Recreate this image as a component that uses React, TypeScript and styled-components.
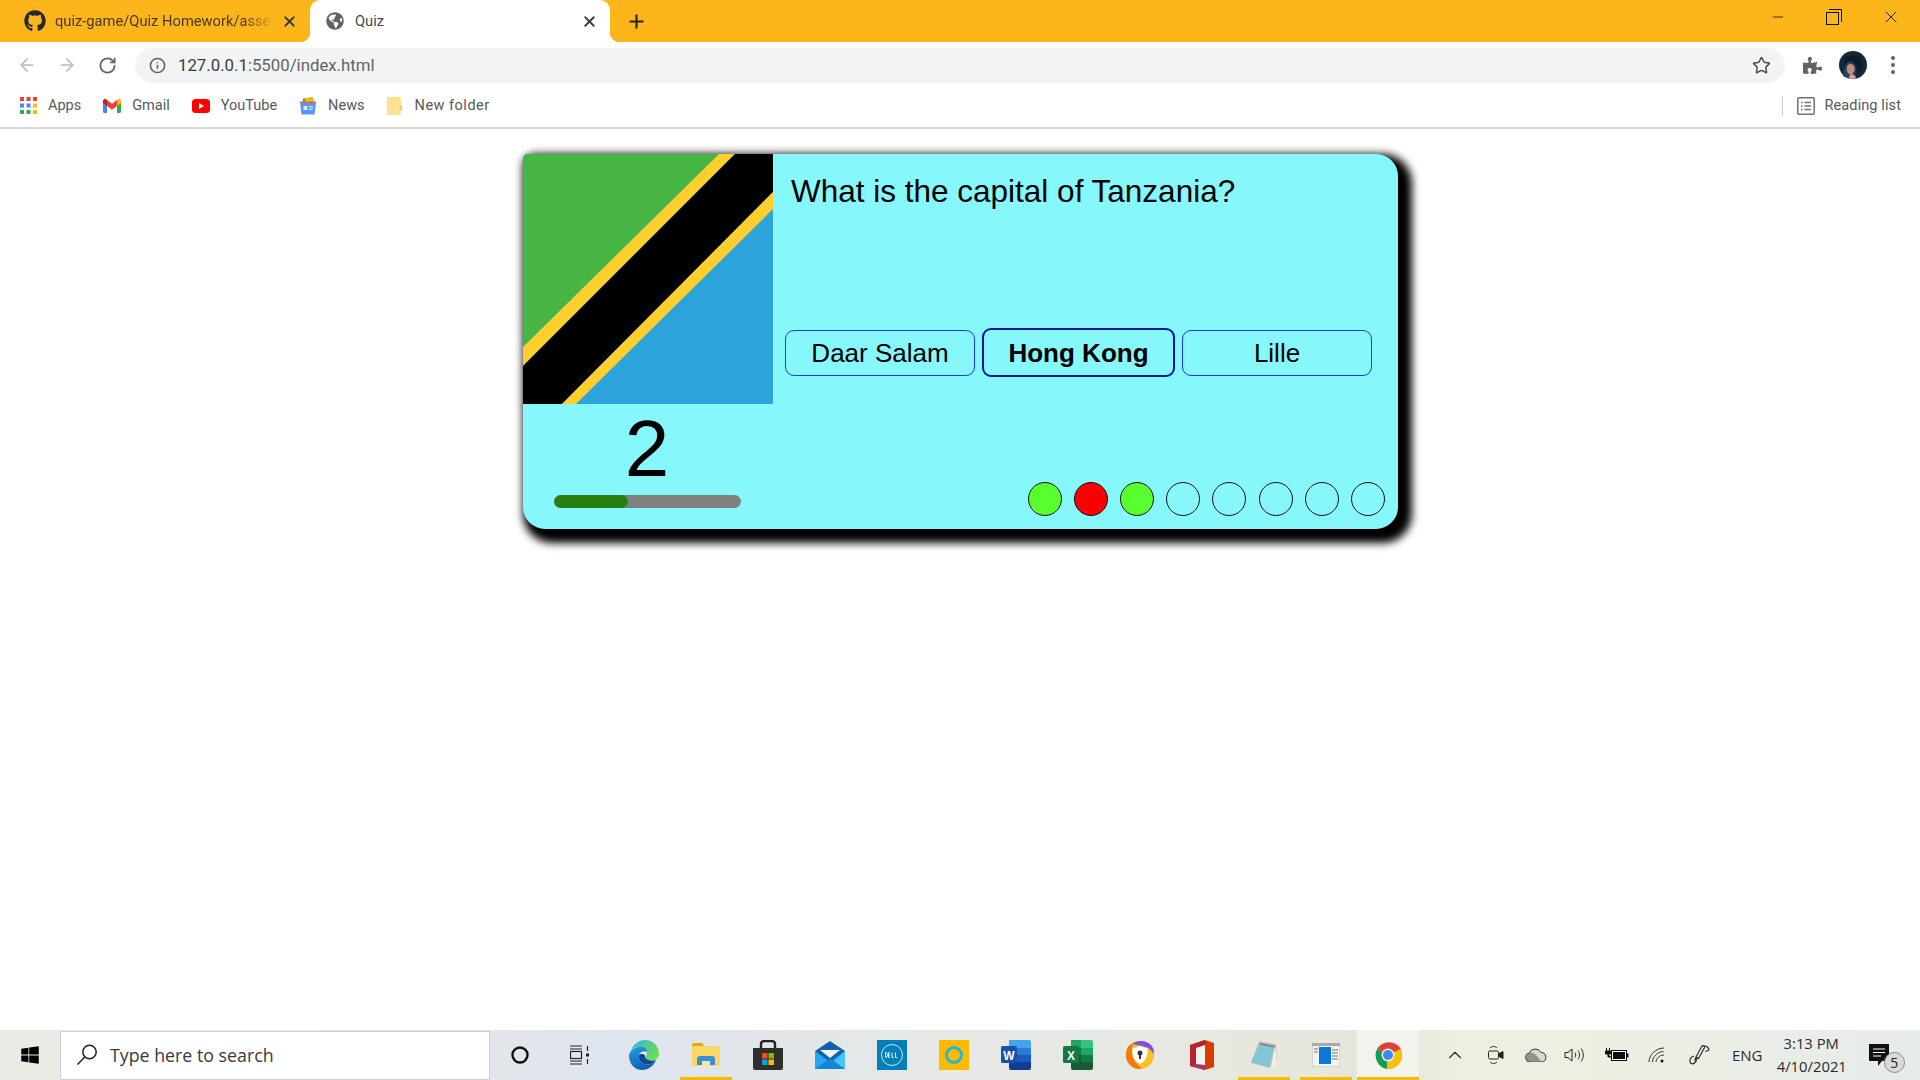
import React from "react";
import styled, { createGlobalStyle } from "styled-components";
import { FaGithub, FaGlobeAmericas, FaPuzzlePiece, FaWindows } from "react-icons/fa";
import { ArrowLeft, RotateCw, Info, Star, Plus, X, Minus, ChevronUp } from "lucide-react";

const GlobalStyle = createGlobalStyle`
  html, body { margin: 0; padding: 0; height: 100%; background: #fff; }
  #root { height: 100%; }
  * { box-sizing: border-box; }
`;

const Screen = styled.div`
  height: 1080px; width: 1920px; display: flex; flex-direction: column; overflow: hidden;
  font-family: "Open Sans", "Liberation Sans", sans-serif; background: #fff;
`;

/* ---------- Browser chrome ---------- */
const TabStrip = styled.div`
  height: 42px; flex: none; background: #fdb51c; display: flex; align-items: stretch; padding-left: 10px; color: #202124;
`;
const Tab = styled.div<{ $active?: boolean }>`
  width: 300px; position: relative; display: flex; align-items: center; padding: 0 10px 0 14px;
  font-family: Roboto, "Open Sans", sans-serif; font-size: 14.7px;
  color: ${(p) => (p.$active ? "#45494d" : "#4a3a14")};
  background: ${(p) => (p.$active ? "#fff" : "transparent")};
  border-radius: 10px 10px 0 0;
  ${(p) =>
    p.$active &&
    `
    &::before, &::after { content: ""; position: absolute; bottom: 0; width: 10px; height: 10px; }
    &::before { left: -10px; background: radial-gradient(circle at 0 0, transparent 10px, #fff 10.5px); }
    &::after { right: -10px; background: radial-gradient(circle at 100% 0, transparent 10px, #fff 10.5px); }
  `}
`;
const TabIcon = styled.span<{ $color: string }>`
  width: 22px; display: flex; align-items: center; justify-content: center; flex: none; color: ${(p) => p.$color};
`;
const TabTitle = styled.span<{ $fade?: boolean }>`
  flex: 1; margin-left: 9px; white-space: nowrap;
  ${(p) => p.$fade && `-webkit-mask-image: linear-gradient(90deg, #000 84%, transparent 97%);`}
`;
const TabClose = styled.span`
  display: flex; margin-right: 2px; color: #3a3a3a;
`;
const NewTab = styled.div`
  display: flex; align-items: center; margin-left: 16px; color: #2b2312;
`;
const WindowControls = styled.div`
  margin-left: auto; display: flex; align-items: center; color: #111; padding: 0 19px 8px 0; gap: 41px;
`;
const RestoreIcon = styled.span`
  width: 13px; height: 13px; position: relative; display: block; border: 1px solid #111;
  margin-top: 2px; margin-left: -1px; margin-right: 1px;
  &::after {
    content: ""; position: absolute; left: 2px; top: -4px; width: 12px; height: 12px;
    border-top: 1px solid #111; border-right: 1px solid #111;
  }
`;
const Toolbar = styled.div`
  height: 46px; flex: none; display: flex; align-items: center; background: #fff; padding-left: 17px;
`;
const NavButton = styled.span<{ $muted?: boolean }>`
  width: 20px; margin-right: 20px; display: flex; justify-content: center;
  color: ${(p) => (p.$muted ? "#b9bbbe" : "#5f6368")};
`;
const FlippedArrow = styled(ArrowLeft)`
  transform: scaleX(-1);
`;
const Omnibox = styled.div`
  width: 1650px; height: 35px; margin-left: -2px; background: #f1f3f4; border-radius: 18px; display: flex; align-items: center;
  padding: 0 14px 0 14px; color: #5f6368;
`;
const UrlText = styled.span`
  font-family: Roboto, "Open Sans", sans-serif; font-size: 16.8px; color: #3c3c3c; margin-left: 12px; flex: 1;
`;
const UrlPath = styled.span`
  color: #5f6368;
`;
const ToolIcons = styled.div`
  display: flex; align-items: center; margin-left: 18px; color: #5f6368; gap: 17px;
`;
const MenuDots = styled.span`
  display: flex; flex-direction: column; gap: 3px; margin-left: 7px;
  & > i { width: 4px; height: 4px; border-radius: 50%; background: #5f6368; display: block; }
`;
const BookmarksBar = styled.div`
  height: 41px; flex: none; display: flex; align-items: center; padding: 0 19px 4px 20px; background: #fff;
  border-bottom: 2px solid #d9dadb;
  font-family: Roboto, "Open Sans", sans-serif; font-size: 14.5px; color: #55585c;
`;
const Bookmark = styled.div`
  display: flex; align-items: center; gap: 11px; margin-right: 22px;
`;
const FolderLabel = styled.span`
  letter-spacing: 0.5px; margin-left: 2px;
`;
const ReadingList = styled.div`
  margin-left: auto; display: flex; align-items: center; gap: 10px; height: 20px;
  border-left: 1px solid #cfd0d2; padding-left: 14px; letter-spacing: 0.1px;
`;

/* ---------- Quiz ---------- */
const Content = styled.main`
  flex: 1; background: #fff; padding-top: 25px;
`;
const Card = styled.section`
  width: 875px; height: 375px; margin: 0 auto; position: relative; left: 0.5px;
  display: grid; grid-template-columns: 250px 1fr; grid-template-rows: 250px 125px;
  background: #86f7fb; border-radius: 5px 22px 22px 22px; box-shadow: 7px 7px 8px 7px #000;
  font-family: "Liberation Sans", Arial, sans-serif; color: #000; overflow: hidden;
`;
const FlagImage = styled.svg`
  display: block; width: 250px; height: 250px;
`;
const QuestionPanel = styled.div`
  display: flex; flex-direction: column; justify-content: space-between; padding: 19px 26px 27px 12px;
`;
const Question = styled.h2`
  margin: 0 0 0 6px; font-weight: 400; font-size: 31.5px; line-height: 37px;
`;
const Answers = styled.div`
  display: flex; align-items: center; gap: 8.5px;
`;
const AnswerButton = styled.button<{ $active?: boolean }>`
  width: ${(p) => (p.$active ? "193px" : "190px")}; height: ${(p) => (p.$active ? "49px" : "46px")};
  margin: ${(p) => (p.$active ? "0 -1.5px" : "0")};
  background: transparent; padding: 1px 0 0;
  border: ${(p) => (p.$active ? "2px solid #00169a" : "1px solid #1a3af5")}; border-radius: 9px;
  font: ${(p) => (p.$active ? "700" : "400")} 26px "Liberation Sans", Arial, sans-serif; color: #000;
`;
const TimerPanel = styled.div`
  display: flex; flex-direction: column; align-items: center; padding-right: 2px;
`;
const Counter = styled.div`
  font-size: 80px; line-height: 72px; margin-top: 9px; height: 82px;
`;
const TimeBar = styled.div`
  width: 187px; height: 13px; border-radius: 7px; background: #808080; overflow: hidden;
`;
const TimeFill = styled.div`
  height: 100%; background: #277f10; border-radius: 7px;
`;
const DotsPanel = styled.div`
  display: flex; justify-content: flex-end; align-items: flex-end; gap: 12.2px; padding: 0 13px 13px 0;
`;
const Dot = styled.span<{ $state?: "right" | "wrong" }>`
  width: 34px; height: 34px; border-radius: 50%; border: 1px solid #111;
  background: ${(p) => (p.$state === "right" ? "#58ff2f" : p.$state === "wrong" ? "#fb0000" : "transparent")};
`;

/* ---------- Taskbar ---------- */
const Taskbar = styled.footer`
  height: 50px; flex: none; display: flex; align-items: stretch; color: #222;
  background: linear-gradient(90deg, #ebebe5 0%, #e6e8e8 20%, #dfe5ef 32%, #e5e8e5 48%, #e6e8e0 65%, #e6e6da 73%, #eeefe0 76%, #ebeee4 88%, #e6ecec 100%);
`;
const StartButton = styled.div`
  width: 60px; display: flex; align-items: center; justify-content: center; color: #000;
`;
const SearchBox = styled.div`
  width: 430px; background: #fff; border: 1px solid #cfcfcf; display: flex; align-items: center;
  padding: 0 0 2px 15px; gap: 12px; font-size: 17.8px; color: #3a3a3a; margin-top: 1px;
`;
const TaskSlot = styled.div<{ $w?: number; $open?: boolean; $focus?: boolean }>`
  width: ${(p) => p.$w ?? 62}px; position: relative; display: flex; align-items: center; justify-content: center;
  background: ${(p) => (p.$focus ? "#f2f3ec" : "transparent")};
  ${(p) =>
    p.$open &&
    `&::after { content: ""; position: absolute; left: ${p.$focus ? 0 : 5}px; right: ${p.$focus ? 0 : 5}px; bottom: 0; height: 3px; background: #ffb900; }`}
`;
const TaskGap = styled.div`
  width: 3px;
`;
const Tray = styled.div`
  flex: 1; display: flex; align-items: center; padding-left: 16px; font-size: 15px; color: #2a2a2a;
`;
const TraySlot = styled.div`
  width: 40.4px; display: flex; justify-content: center; align-items: center;
`;
const Lang = styled.div`
  width: 59px; text-align: center; font-size: 15px;
`;
const Clock = styled.div`
  width: 69px; text-align: center; font-size: 14.8px; line-height: 23px; margin-top: -1px; white-space: nowrap;
`;
const Notifications = styled.div`
  position: relative; margin-left: 23px; width: 24px; height: 24px; margin-top: 1px;
`;
const Badge = styled.span`
  position: absolute; right: -12px; top: 8px; width: 21px; height: 21px; border-radius: 50%;
  background: #d9dcd6; border: 1px solid #8a8a8a; font-size: 14px; line-height: 19px; text-align: center; color: #222;
`;

/* ---------- Drawn icons ---------- */
const Flag = () => (
  <FlagImage viewBox="0 0 250 250">
    <rect width="250" height="250" fill="#2ca4db" />
    <polygon points="0,0 196,0 0,193" fill="#46b544" />
    <polygon points="196,0 212,0 0,212 0,193" fill="#fccf2e" />
    <polygon points="212,0 250,0 250,38 39,250 0,250 0,212" fill="#000" />
    <polygon points="250,38 250,55 53,250 39,250" fill="#fccf2e" />
  </FlagImage>
);

const AppsIcon = () => (
  <svg width="17" height="17" viewBox="0 0 17 17">
    {[
      ["#ea4335", "#ea4335", "#ea4335"],
      ["#4285f4", "#4285f4", "#fbbc05"],
      ["#34a853", "#34a853", "#fbbc05"],
    ].map((row, y) => row.map((c, x) => <rect key={`${x}${y}`} x={x * 6.5} y={y * 6.5} width="4" height="4" fill={c} />))}
  </svg>
);
const GmailIcon = () => (
  <svg width="18" height="14" viewBox="0 0 18 14">
    <path d="M0 2v10.5A1.5 1.5 0 0 0 1.5 14H4V6z" fill="#4285f4" />
    <path d="M18 2v10.5a1.5 1.5 0 0 1-1.5 1.5H14V6z" fill="#34a853" />
    <path d="M14 1v6l4-3V2c0-2-2-2.500-3-1.700z" fill="#fbbc05" />
    <path d="M4 7V1l5 3.800L14 1v6L9 10.700z" fill="#ea4335" />
    <path d="M0 2v2l4 3V1L3 .3C2-.5 0 0 0 2z" fill="#c5221f" />
  </svg>
);
const YoutubeIcon = () => (
  <svg width="18" height="14" viewBox="0 0 18 14">
    <rect width="18" height="14" rx="3.500" fill="#f00" />
    <polygon points="7,4 12,7 7,10" fill="#fff" />
  </svg>
);
const NewsIcon = () => (
  <svg width="18" height="18" viewBox="0 0 18 18">
    <rect x="4" y="1" width="10" height="6" fill="#34a853" transform="rotate(-8 9 4)" />
    <rect x="6" y="1" width="9" height="6" fill="#fbbc05" transform="rotate(8 10 4)" />
    <path d="M1 5l16 0-1.500 12.500H2.500z" fill="#5a95ee" />
    <rect x="1" y="4.500" width="16" height="1.500" fill="#e9604f" />
    <rect x="4.500" y="9" width="4" height="4" fill="#dbe7fb" />
    <rect x="10" y="9" width="4" height="1.200" fill="#dbe7fb" />
    <rect x="10" y="11.500" width="4" height="1.200" fill="#dbe7fb" />
  </svg>
);
const FolderIcon = () => (
  <svg width="15" height="18" viewBox="0 0 15 18">
    <path d="M1 0h11.500A1.500 1.500 0 0 1 14 1.500V17a1 1 0 0 1-1 1H1a1 1 0 0 1-1-1V1a1 1 0 0 1 1-1z" fill="#fde293" />
    <path d="M13 8v4h-1v1.500h3V8z" fill="#f6cf63" />
  </svg>
);
const ReadingIcon = () => (
  <svg width="18" height="18" viewBox="0 0 18 18" fill="none" stroke="#6f7276" strokeWidth="1.500">
    <rect x=".8" y=".8" width="16.400" height="16.400" rx="1" />
    <path d="M4 5.500h1.500M4 9h1.500M4 12.500h1.500M7.500 5.500H14M7.500 9H14M7.500 12.500H14" />
  </svg>
);
const Avatar = () => (
  <svg width="28" height="28" viewBox="0 0 28 28">
    <circle cx="14" cy="14" r="14" fill="#13283a" />
    <path d="M4 25c1-8 3-14 7-15 3 0 6 4 6 9l-1 8c-5 1-9 0-12-2z" fill="#28445f" />
    <path d="M9 14c2-2 5-1 6 1s1 5-1 7-4 1-5 0-2-6 0-8z" fill="#c98a7c" />
    <path d="M12 23c2 0 4 1 5 4-2 1-5 1-7 .5 0-2 1-4.500 2-4.500z" fill="#d8a3a0" />
    <path d="M5 8C9 3 19 3 23 9c2 4 1 9-3 13-1-5-3-10-8-11-3-1-5 1-7 4z" fill="#0c1c2a" />
  </svg>
);
const SearchGlass = () => (
  <svg width="22" height="22" viewBox="0 0 22 22" fill="none" stroke="#222" strokeWidth="1.500">
    <circle cx="13.500" cy="8" r="6.700" />
    <path d="M8.800 13 1.500 20.500" />
  </svg>
);
const TaskViewIcon = () => (
  <svg width="21" height="20" viewBox="1 0 21 20" fill="none" stroke="#222" strokeWidth="1.200">
    <path d="M1 1h12M1 4h12" />
    <rect x="1.500" y="6.500" width="11" height="7" />
    <path d="M1 16h12M1 19h12M18.500 1v5M18.500 14v5" />
    <rect x="17" y="8.500" width="3" height="3" fill="#222" stroke="none" />
  </svg>
);
const EdgeIcon = () => (
  <svg width="30" height="30" viewBox="0 0 30 30">
    <defs>
      <linearGradient id="edgeA" x1="0" y1="0" x2="1" y2="0.600">
        <stop offset="0" stopColor="#2ab9d6" />
        <stop offset="1" stopColor="#6fdc5a" />
      </linearGradient>
      <linearGradient id="edgeB" x1="0" y1="0" x2="0.500" y2="1">
        <stop offset="0" stopColor="#1f9fe6" />
        <stop offset="1" stopColor="#0f5fb0" />
      </linearGradient>
    </defs>
    <path d="M2 11C4 4 10 0 16 0c8 0 14 6 14 14 0 4-3 6.500-7 6.500-4 0-7-1-7-3 0-1 2-1.500 2-4 0-3-3-7-8-7-3 0-6 2-8 4.500z" fill="url(#edgeA)" />
    <path d="M2 11c3-3 6-4.500 9-4.500 4 0 7 2.500 7 5.500-2-1.500-7-1-8 3-1 5 3 10 9 9.500 3 0 6-2 8-4.500-2 6-8 10-14 10C6 30 0 24 0 16c0-2 1-4 2-5z" fill="url(#edgeB)" />
    <path d="M10 15c-1 5 3 10 9 9.500 3 0 6-2 8-4.500-2 .8-3 .8-4 .5-4 0-8-2-7-5-1-2-5-2-6-.500z" fill="#0c4a98" />
  </svg>
);
const ExplorerIcon = () => (
  <svg width="28" height="24" viewBox="0 0 28 24">
    <path d="M0 2a2 2 0 0 1 2-2h8l3 4H0z" fill="#e8a612" />
    <rect y="3" width="28" height="20" rx="1.500" fill="#fdd868" />
    <path d="M5 22v-6a3 3 0 0 1 3-3h12a3 3 0 0 1 3 3v6h-5v-4h-8v4z" fill="#3a8fd8" />
    <rect x="10" y="18" width="8" height="5" fill="#fde79a" />
  </svg>
);
const StoreIcon = () => (
  <svg width="30" height="30" viewBox="0 0 30 30">
    <path d="M8 8V4a3 3 0 0 1 3-3h8a3 3 0 0 1 3 3v4" fill="none" stroke="#222" strokeWidth="2.400" />
    <path d="M0 8h30v20a2 2 0 0 1-2 2H2a2 2 0 0 1-2-2z" fill="#2e2e2e" />
    <rect x="9" y="13" width="5.500" height="5.500" fill="#f25022" />
    <rect x="15.500" y="13" width="5.500" height="5.500" fill="#7fba00" />
    <rect x="9" y="19.500" width="5.500" height="5.500" fill="#00a4ef" />
    <rect x="15.500" y="19.500" width="5.500" height="5.500" fill="#ffb900" />
  </svg>
);
const MailIcon = () => (
  <svg width="30" height="28" viewBox="0 0 30 28">
    <path d="M0 10 15 0l15 10v18H0z" fill="#0f63ad" />
    <path d="M5 9h20l-10 8z" fill="#f2f4f6" />
    <path d="M0 10l15 11 15-11v18H0z" fill="#27a7ea" />
    <path d="M30 10v18H12z" fill="#47c4f3" />
    <path d="M0 28 15 17.500 30 28z" fill="#1484d6" />
  </svg>
);
const DellIcon = () => (
  <svg width="30" height="30" viewBox="0 0 30 30">
    <rect width="30" height="30" fill="#007fba" />
    <circle cx="15" cy="15" r="10.500" fill="none" stroke="#cfe6f2" strokeWidth="1" />
    <path d="M8.500 12.500v5M8.500 12.500c3 0 3 5 0 5M13 12.500h-1.500v5H13M11.500 15H13M15 12.500v5h2M18.500 12.500v5h2" fill="none" stroke="#e4f1f8" strokeWidth="1" />
  </svg>
);
const AlexaIcon = () => (
  <svg width="30" height="30" viewBox="0 0 30 30">
    <rect width="30" height="30" fill="#ffb900" />
    <circle cx="15" cy="15" r="7.500" fill="none" stroke="#22b7d6" strokeWidth="3" />
  </svg>
);
const WordIcon = () => (
  <svg width="30" height="30" viewBox="0 0 30 30">
    <path d="M8 0h20a2 2 0 0 1 2 2v6H8z" fill="#41a5ee" />
    <rect x="8" y="8" width="22" height="7" fill="#2b7cd3" />
    <rect x="8" y="15" width="22" height="7" fill="#185abd" />
    <path d="M8 22h22v6a2 2 0 0 1-2 2H10a2 2 0 0 1-2-2z" fill="#103f91" />
    <rect y="6" width="16" height="17" rx="1.500" fill="#1651b0" />
    <text x="8" y="19.500" textAnchor="middle" fontFamily="Liberation Sans" fontWeight="700" fontSize="12" fill="#fff">W</text>
  </svg>
);
const ExcelIcon = () => (
  <svg width="30" height="30" viewBox="0 0 30 30">
    <path d="M8 0h10v8H8z" fill="#21a366" />
    <path d="M18 0h10a2 2 0 0 1 2 2v6H18z" fill="#33c481" />
    <rect x="8" y="8" width="10" height="7" fill="#107c41" />
    <rect x="18" y="8" width="12" height="7" fill="#21a366" />
    <rect x="8" y="15" width="10" height="7" fill="#185c37" />
    <rect x="18" y="15" width="12" height="7" fill="#107c41" />
    <path d="M8 22h22v6a2 2 0 0 1-2 2H10a2 2 0 0 1-2-2z" fill="#185c37" />
    <rect y="6" width="16" height="17" rx="1.500" fill="#107c41" />
    <text x="8" y="19.500" textAnchor="middle" fontFamily="Liberation Sans" fontWeight="700" fontSize="12" fill="#fff">X</text>
  </svg>
);
const BrowserShieldIcon = () => (
  <svg width="28" height="28" viewBox="0 0 28 28">
    <circle cx="14" cy="14" r="14" fill="#f9c02e" />
    <path d="M6 3C11-1 20-1 25 4c2 2 3 5 3 9-3-4-6-7-9-7-5-2-9-2-13-3z" fill="#7c4fe0" />
    <path d="M0 14C0 8 3 3 6 3c1 2 0 3 0 5-1 6 1 12 8 18 1 1 2 2 0 2C6 28 0 22 0 14z" fill="#f4780e" />
    <path d="M14 5c3 1 5 2 7.500 2 .8 7-1.500 13-7.500 16-6-3-8.300-9-7.500-16 2.500 0 4.500-1 7.500-2z" fill="#fff" />
    <circle cx="14" cy="12" r="2.500" fill="#2c3548" />
    <rect x="13" y="13" width="2" height="5" fill="#2c3548" />
  </svg>
);
const OfficeIcon = () => (
  <svg width="24" height="30" viewBox="0 0 24 30">
    <path d="M15 0 24 3v24l-9 3-15-4V5z" fill="#d83b01" />
    <path d="M15 0 0 5v21l6-2V8l9-3z" fill="#b7232c" />
    <path d="M0 26l15 4 0-5-9-1z" fill="#a8326d" />
    <path d="M15 5v20l-9-1V8z" fill="#f2f2ea" />
  </svg>
);
const NotepadIcon = () => (
  <svg width="28" height="30" viewBox="0 0 28 30">
    <path d="M9 1 26 4l1 20-2 4L1 23z" fill="#c8c3b2" />
    <path d="M10 3l15 3-6 22L1 22z" fill="#84c6d8" />
    <path d="M25 6l2 18-2 4-4-1z" fill="#f4f2e8" />
    <path d="M10 3l15 3-.5 1.500-15-3z" fill="#7a7a7a" />
  </svg>
);
const WindowAppIcon = () => (
  <svg width="28" height="24" viewBox="0 0 28 24">
    <rect width="28" height="24" fill="#f3f3f3" stroke="#b4b4b4" />
    <rect x="0" y="0" width="28" height="3" fill="#a9a9a9" />
    <rect x="7" y="4" width="12" height="17" fill="#0a78d8" />
    <path d="M2 6h4M2 9h4M20 7h6M20 10h6M20 13h6M20 16h6" stroke="#a0a0a0" strokeWidth="1.400" />
  </svg>
);
const ChromeIcon = () => (
  <svg width="28" height="28" viewBox="0 0 28 28">
    <path d="M14 14 3 8A14 14 0 0 1 27 8z" fill="#db4437" />
    <path d="M14 14 3 8a14 14 0 0 0 10 20z" fill="#0f9d58" />
    <path d="M14 14 27 8a14 14 0 0 1-14 20z" fill="#f4c20d" />
    <circle cx="14" cy="14" r="6.500" fill="#f1f3f4" />
    <circle cx="14" cy="14" r="5" fill="#4285f4" />
  </svg>
);
const MeetIcon = () => (
  <svg width="16" height="20" viewBox="0 0 16 20" fill="none" stroke="#222" strokeWidth="1">
    <rect x=".5" y="6" width="10" height="8" rx="1.500" />
    <path d="M11 8.500 15 6.500v7L11 11.500z" fill="#222" />
    <path d="M2 3c2-2 5-2 7 0M2 17c2 2 5 2 7 0" />
  </svg>
);
const CloudIcon = () => (
  <svg width="22" height="14" viewBox="0 0 22 14">
    <path d="M5 14a4.500 4.500 0 0 1-.8-8.900A6.500 6.500 0 0 1 16 4.500 4.800 4.800 0 0 1 17 14z" fill="#d8d8d2" stroke="#333" strokeWidth="1" />
    <path d="M4.500 13.500a4 4 0 0 1-3-6.500c2-3 6-3 9-.5 3 3.500 6 7 6 7z" fill="#6d6d6d" opacity=".65" />
  </svg>
);
const SpeakerIcon = () => (
  <svg width="24" height="16" viewBox="0 0 24 16" fill="none" stroke="#222" strokeWidth="1">
    <path d="M1 5.500h3L8 2v12L4 10.500H1z" />
    <path d="M11 5.500c1 1.500 1 3.500 0 5M14 3.500c2 2.500 2 6.500 0 9M17 1.500c3 3.500 3 9.500 0 13" />
  </svg>
);
const BatteryIcon = () => (
  <svg width="24" height="14" viewBox="0 0 24 14">
    <path d="M1.500 0v3M4.500 0v3" stroke="#111" strokeWidth="1" />
    <path d="M.5 3h5v3h-5zM3 6v3h3" stroke="#111" strokeWidth="1" fill="#111" />
    <rect x="6.500" y="2.500" width="15" height="10" fill="#fff" stroke="#111" strokeWidth="1" />
    <rect x="8" y="4" width="12" height="7" fill="#111" />
    <rect x="22" y="5.500" width="1.500" height="4" fill="#111" />
  </svg>
);
const WifiIcon = () => (
  <svg width="18" height="16" viewBox="0 0 18 16" fill="none" stroke="#333" strokeWidth="1">
    <path d="M1 15C1 8 8 1 16 1M4.500 15c0-5 5-10.500 11-10.500M8 15c0-3 3-7 8-7" />
    <circle cx="14" cy="14" r="1.500" fill="#111" stroke="none" />
  </svg>
);
const PenIcon = () => (
  <svg width="26" height="22" viewBox="-4 0 26 22" fill="none" stroke="#222" strokeWidth="1.100">
    <path d="M13 2 7 13l2.500 1.500L15.500 3.500C15.500 2 14 1 13 2zM7 13l-1 3 2.500-1.500" />
    <path d="M15 2c3 0 5 2 5 4l-3.500 1.500M5 12c-3 1-4.500 3-4 6 .5 2 3 2.500 4.500 1 1.500-1 2-3 2-4" />
  </svg>
);
const ActionCenterIcon = () => (
  <svg width="24" height="24" viewBox="0 0 24 24">
    <path d="M0 0h20v17h-7l-4 5v-5H0z" fill="#111" />
    <path d="M4 5h12M4 8.500h12M4 12h8" stroke="#fff" strokeWidth="1" />
  </svg>
);

const dots: ("right" | "wrong" | undefined)[] = ["right", "wrong", "right", undefined, undefined, undefined, undefined, undefined];
const taskApps = [
  { id: "edge", icon: <EdgeIcon /> },
  { id: "explorer", icon: <ExplorerIcon />, open: true },
  { id: "store", icon: <StoreIcon /> },
  { id: "mail", icon: <MailIcon /> },
  { id: "dell", icon: <DellIcon /> },
  { id: "alexa", icon: <AlexaIcon /> },
  { id: "word", icon: <WordIcon /> },
  { id: "excel", icon: <ExcelIcon /> },
  { id: "shield", icon: <BrowserShieldIcon /> },
  { id: "office", icon: <OfficeIcon /> },
  { id: "notepad", icon: <NotepadIcon />, open: true },
  { id: "window", icon: <WindowAppIcon />, open: true },
  { id: "chrome", icon: <ChromeIcon />, open: true, focus: true },
];

export default function App() {
  return (
    <Screen>
      <GlobalStyle />
      <TabStrip>
        <Tab>
          <TabIcon $color="#24292e"><FaGithub size={22} /></TabIcon>
          <TabTitle $fade>quiz-game/Quiz Homework/asse</TabTitle>
          <TabClose><X size={17} strokeWidth={2.6} /></TabClose>
        </Tab>
        <Tab $active>
          <TabIcon $color="#5f6368"><FaGlobeAmericas size={18} /></TabIcon>
          <TabTitle>Quiz</TabTitle>
          <TabClose><X size={17} strokeWidth={2.6} /></TabClose>
        </Tab>
        <NewTab><Plus size={21} strokeWidth={2.4} /></NewTab>
        <WindowControls>
          <Minus size={16} strokeWidth={1.2} />
          <RestoreIcon />
          <X size={20} strokeWidth={1.1} />
        </WindowControls>
      </TabStrip>
      <Toolbar>
        <NavButton $muted><ArrowLeft size={20} strokeWidth={2} /></NavButton>
        <NavButton $muted><FlippedArrow size={20} strokeWidth={2} /></NavButton>
        <NavButton><RotateCw size={19} strokeWidth={2.2} /></NavButton>
        <Omnibox>
          <Info size={17} strokeWidth={2.2} />
          <UrlText>127.0.0.1<UrlPath>:5500/index.html</UrlPath></UrlText>
          <Star size={19} strokeWidth={1.8} color="#45494d" />
        </Omnibox>
        <ToolIcons>
          <FaPuzzlePiece size={19} />
          <Avatar />
          <MenuDots><i /><i /><i /></MenuDots>
        </ToolIcons>
      </Toolbar>
      <BookmarksBar>
        <Bookmark><AppsIcon />Apps</Bookmark>
        <Bookmark><GmailIcon />Gmail</Bookmark>
        <Bookmark><YoutubeIcon />YouTube</Bookmark>
        <Bookmark><NewsIcon />News</Bookmark>
        <Bookmark><FolderIcon /><FolderLabel>New folder</FolderLabel></Bookmark>
        <ReadingList><ReadingIcon />Reading list</ReadingList>
      </BookmarksBar>
      <Content>
        <Card>
          <Flag />
          <QuestionPanel>
            <Question>What is the capital of Tanzania?</Question>
            <Answers>
              <AnswerButton>Daar Salam</AnswerButton>
              <AnswerButton $active>Hong Kong</AnswerButton>
              <AnswerButton>Lille</AnswerButton>
            </Answers>
          </QuestionPanel>
          <TimerPanel>
            <Counter>2</Counter>
            <TimeBar><TimeFill style={{ width: "40%" }} /></TimeBar>
          </TimerPanel>
          <DotsPanel>
            {dots.map((d, i) => <Dot key={i} $state={d} />)}
          </DotsPanel>
        </Card>
      </Content>
      <Taskbar>
        <StartButton><FaWindows size={20} /></StartButton>
        <SearchBox><SearchGlass />Type here to search</SearchBox>
        <TaskSlot $w={60}>
          <svg width="18" height="18" viewBox="0 0 18 18"><circle cx="9" cy="9" r="7.500" fill="none" stroke="#111" strokeWidth="2.400" /></svg>
        </TaskSlot>
        <TaskSlot $w={60}><TaskViewIcon /></TaskSlot>
        <TaskGap />
        {taskApps.map((a) => (
          <TaskSlot key={a.id} $open={a.open} $focus={a.focus}>{a.icon}</TaskSlot>
        ))}
        <Tray>
          <TraySlot><ChevronUp size={22} strokeWidth={1.2} /></TraySlot>
          <TraySlot><MeetIcon /></TraySlot>
          <TraySlot><CloudIcon /></TraySlot>
          <TraySlot><SpeakerIcon /></TraySlot>
          <TraySlot><BatteryIcon /></TraySlot>
          <TraySlot><WifiIcon /></TraySlot>
          <TraySlot><PenIcon /></TraySlot>
          <Lang>ENG</Lang>
          <Clock>3:13 PM<br />4/10/2021</Clock>
          <Notifications>
            <ActionCenterIcon />
            <Badge>5</Badge>
          </Notifications>
        </Tray>
      </Taskbar>
    </Screen>
  );
}
